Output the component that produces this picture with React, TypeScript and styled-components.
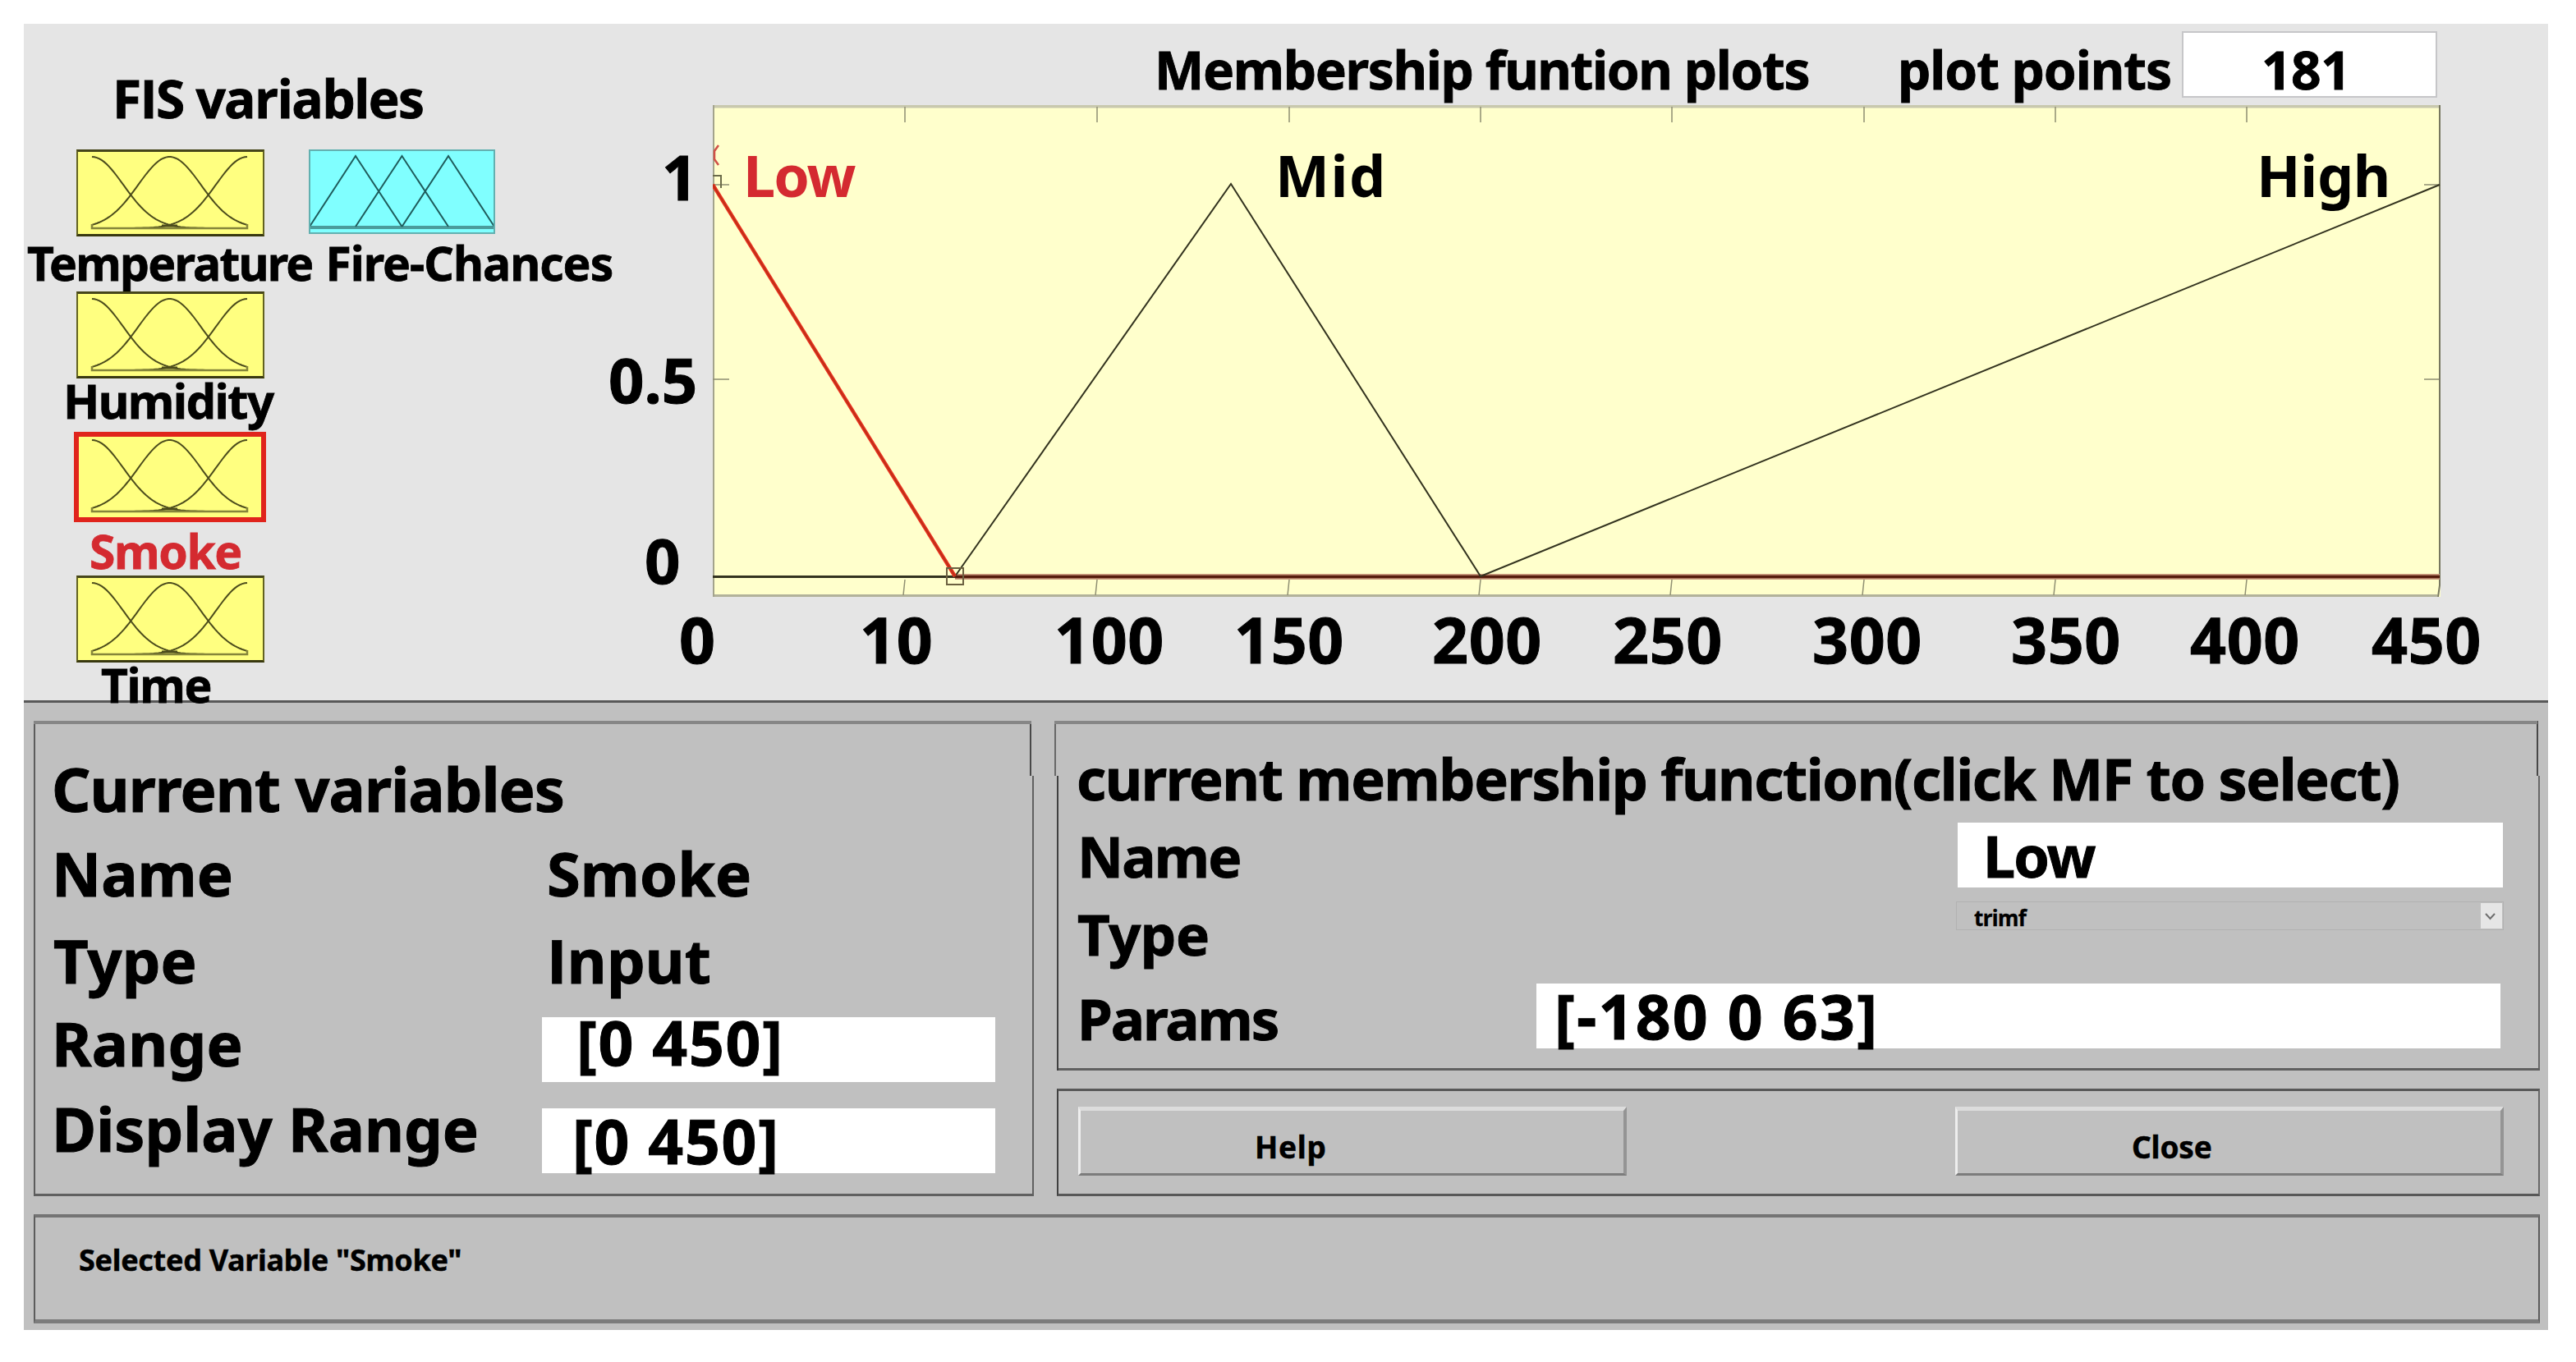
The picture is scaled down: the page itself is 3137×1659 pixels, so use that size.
import React, { useState } from 'react'
import styled, { createGlobalStyle, css } from 'styled-components'

//Styles
const GlobalStyle = createGlobalStyle`
* {
  box-sizing: border-box;
}
body {
  margin: 0;
  background-color: white;
}
#root {
  display: flex;
}
`
const noto = css`
font-family: 'Noto Sans', 'Open Sans', sans-serif;
font-weight: 700;
line-height: 1;
white-space: nowrap;
color: black;
`

//Components
const Text = styled.span<{ $size: number; $spacing?: number; $x?: number; $y?: number; $plainI?: boolean; $red?: boolean }>`
${noto}
display: block;
font-size: ${p => p.$size}px;
letter-spacing: ${p => p.$spacing || 0}px;
margin: ${p => p.$y || 0}px 0 0 ${p => p.$x || 0}px;
-webkit-text-stroke: ${p => p.$size / 75}px;
${p => p.$plainI && "font-family: 'Open Sans', sans-serif;"}
${p => p.$red && 'color: #d42a30;'}
`
const Window = styled.div`
width: 3074px;
height: 1591px;
margin: 29px 0 0 29px;
background-color: #e5e5e5;
`
const Top = styled.div`
display: flex;
height: 824px;
`
const Sidebar = styled.div`
width: 713px;
flex-shrink: 0;
padding-top: 59px;
`
const IconRow = styled.div<{ $top: number; $left?: number }>`
display: flex;
gap: 54px;
height: ${p => (p.$left ? 110 : 106)}px;
margin: ${p => p.$top}px 0 0 ${p => p.$left || 64}px;
`
const LabelRow = styled.div<{ $top: number }>`
display: flex;
margin-top: ${p => p.$top}px;
`
const VariableBox = styled.svg<{ $selected?: boolean; $output?: boolean }>`
display: block;
width: ${p => (p.$selected ? 234 : p.$output ? 227 : 229)}px;
height: ${p => (p.$selected ? 110 : p.$output ? 103 : 106)}px;
background-color: ${p => (p.$output ? '#80ffff' : '#ffff80')};
border: 2px solid ${p => (p.$output ? '#62b0b0' : '#62621f')};
${p => !p.$output && css`
border-top: 3px solid #45451a;
border-bottom: 3px solid #38380f;
`}
${p => p.$selected && css`
border: 6px solid #e0241c;
`}
`
const Plots = styled.div`
flex: 1;
`
const PlotHeader = styled.div`
display: flex;
align-items: flex-start;
height: 99px;
padding-left: 664px;
`
const HeaderCell = styled.div<{ $width: number }>`
width: ${p => p.$width}px;
padding-top: 24px;
`
const PointsBox = styled.div`
width: 311px;
height: 81px;
margin-top: 9px;
padding: 13px 0 0 95px;
border: 2px solid #c6c6c8;
background-color: white;
`
const ChartRow = styled.div`
display: flex;
height: 599px;
`
const YAxis = styled.div`
width: 126px;
flex-shrink: 0;
`
const Chart = styled.svg`
display: block;
width: 2104px;
height: 599px;
text {
  font-family: 'Noto Sans', sans-serif;
  font-weight: 700;
  font-size: 70px;
  -webkit-text-stroke: 1px;
}
`
const XAxis = styled.div`
display: flex;
padding: 13px 0 0 85px;
`
const XTick = styled.div<{ $width: number }>`
width: ${p => p.$width}px;
flex-shrink: 0;
`
const Bottom = styled.div`
display: flex;
flex-direction: column;
gap: 22px;
height: 767px;
padding: 22px 10px 8px 12px;
border-top: 3px solid #585858;
background-color: #c0c0c0;
`
const Panels = styled.div`
display: flex;
gap: 25px;
`
const RightColumn = styled.div`
display: flex;
flex-direction: column;
gap: 22px;
`
const line = (color: string) => `linear-gradient(${color}, ${color}) no-repeat`

// the outer edges step sideways 67px below the top of both panels
const VariablePanel = styled.div`
width: 1218px;
height: 579px;
padding: 46px 0 0 21px;
background:
  ${line('#868686')} 0 0 / 1215px 4px,
  ${line('#5c5c5c')} 0 0 / 2px 100%,
  ${line('#606060')} 0 100% / 100% 3px,
  ${line('#484848')} 1213px 0 / 2px 67px,
  ${line('#606060')} 1216px 67px / 2px 512px;
`
const FunctionPanel = styled.div`
width: 1809px;
height: 426px;
padding: 35px 0 0 27px;
background:
  ${line('#868686')} 0 0 / 1806px 4px,
  ${line('#686868')} 0 0 / 2px 67px,
  ${line('#404040')} 3px 67px / 2px 359px,
  ${line('#606060')} 3px 100% / 1806px 3px,
  ${line('#484848')} 1805px 0 / 2px 67px,
  ${line('#686868')} 1807px 67px / 2px 359px;
`
const ButtonPanel = styled.div`
display: flex;
gap: 400px;
height: 131px;
margin-left: 3px;
padding: 19px 0 0 24px;
border: 3px solid #585858;
border-left: 2px solid #404040;
border-right: 2px solid #686868;
`
const StatusPanel = styled.div`
height: 133px;
padding: 34px 0 0 53px;
border: 2px solid #5c5c5c;
border-top: 4px solid #747474;
border-bottom: 5px solid #7c7c7c;
`
const Row = styled.div<{ $height: number; $label: number }>`
display: grid;
grid-template-columns: ${p => p.$label}px auto;
justify-content: start;
align-items: start;
height: ${p => p.$height}px;
`
const Field = styled.div<{ $width: number; $left: number; $top?: number }>`
width: ${p => p.$width}px;
height: 79px;
margin-top: ${p => p.$top || 0}px;
padding-left: ${p => p.$left}px;
background-color: white;
display: flex;
align-items: flex-start;
`
const Select = styled.div`
display: flex;
justify-content: space-between;
width: 667px;
height: 35px;
padding: 1px 1px 1px 21px;
border: 1px solid #b2b2b2;
`
const Arrow = styled.svg`
width: 26px;
height: 31px;
background-color: #e6e6e6;
`
const Button = styled.button`
display: flex;
align-items: flex-start;
width: 668px;
height: 84px;
padding: 25px 0 0 212px;
background-color: #c0c0c0;
border: solid;
border-width: 5px 4px 3px 3px;
border-color: #dcdcdc #949494 #7c7c7c #eeeeee;
`

const bell = (center: number) => {
  let d = ''
  for (let x = 19; x <= 208; x += 3) {
    const y = 96 - 87 * Math.exp(-((x - center) ** 2) / 2934)
    d += `${d ? 'L' : 'M'}${x} ${y.toFixed(1)}`
  }
  return d
}

function InputIcon({ selected = false }: { selected?: boolean }) {
  return (
    <VariableBox $selected={selected} viewBox={selected ? '3 5 222 98' : '2 3 225 100'}>
      <g fill="none" stroke="#4c4c1c" strokeWidth="2">
        <path d={bell(19)} />
        <path d={bell(113.5)} />
        <path d={bell(208)} />
        <path d="M19 91V96H208V91" stroke="#85853a" strokeWidth="2.5" />
        <path d="M104 93H123" strokeWidth="3" />
      </g>
    </VariableBox>
  )
}

function OutputIcon() {
  return (
    <VariableBox $output viewBox="2 2 223 99">
      <path d="M0 95H227" stroke="#4a9c9c" strokeWidth="4" />
      <path d="M1 94L57 8L113.5 94M57 94L113.5 8L170 94M113.5 94L170 8L226 94" fill="none" stroke="#1f5c5c" strokeWidth="2" />
    </VariableBox>
  )
}

const topTicks = [234, 468, 702, 935, 1168, 1402, 1635, 1868]

function MembershipChart() {
  return (
    <Chart viewBox="0 0 2104 599">
      <rect width="2104" height="599" fill="#ffffcc" />
      <path d="M0 1.5H2104" stroke="#c8c8ae" strokeWidth="4" />
      <path d="M0 597.5H2100" stroke="#b2b29a" strokeWidth="3" />
      <path d="M1 0V599" stroke="#a3a38c" strokeWidth="2" />
      <path d="M2103 0V585L2101 599" fill="none" stroke="#77775f" strokeWidth="2" />
      <g stroke="#8f8f72" strokeWidth="1.5">
        {topTicks.map(x => (
          <path key={x} d={`M${x} 2V21M${x} 578L${x - 2} 597`} />
        ))}
        <path d="M0 97H20M0 334H20M2084 97H2102M2084 334H2102" />
      </g>
      <path d="M0 574.5H295" stroke="#33331f" strokeWidth="3" />
      <path d="M295 574.5H2103" stroke="#c9997c" strokeWidth="7" />
      <path d="M295 574.5H2103" stroke="#561c0c" strokeWidth="3.5" />
      <path d="M295 574L631 96L935 574L2103 97" fill="none" stroke="#33331f" strokeWidth="2" />
      <path d="M0 97L295 574" stroke="#e8301e" strokeWidth="4.5" />
      <path d="M0 97L295 574" stroke="#b83018" strokeWidth="1.5" />
      <path d="M0 86H10V101" fill="none" stroke="#6b6b4a" strokeWidth="2" />
      <rect x="285" y="564" width="20" height="20" fill="none" stroke="#6b6040" strokeWidth="2" />
      <path d="M7 49L2 56V66L7 73" fill="none" stroke="#d05048" strokeWidth="2.5" />
      <text x="37" y="112" fill="#d42a30" letterSpacing="-2">Low</text>
      <text x="685" y="112" letterSpacing="1.5">Mid</text>
      <text x="1880" y="112" letterSpacing="-0.3">High</text>
    </Chart>
  )
}

const xTicks = [
  { label: '0', width: 220 },
  { label: '10', width: 237 },
  { label: '100', width: 219 },
  { label: '150', width: 241 },
  { label: '200', width: 220 },
  { label: '250', width: 243 },
  { label: '300', width: 242 },
  { label: '350', width: 218 },
  { label: '400', width: 221 },
  { label: '450', width: 140 },
]

export default function App() {
  const [mfName] = useState('Low')
  const [range] = useState('[0 450]')

  return (
    <>
      <GlobalStyle />
      <Window>
        <Top>
          <Sidebar>
            <Text $size={64} $spacing={-1.7} $x={108} $plainI>FIS variables</Text>
            <IconRow $top={30}>
              <InputIcon />
              <OutputIcon />
            </IconRow>
            <LabelRow $top={4}>
              <Text $size={57} $spacing={-1.8} $x={4}>Temperature</Text>
              <Text $size={57} $spacing={-1} $x={16}>Fire-Chances</Text>
            </LabelRow>
            <IconRow $top={6}>
              <InputIcon />
            </IconRow>
            <LabelRow $top={-2}>
              <Text $size={58} $spacing={-1.6} $x={48}>Humidity</Text>
            </LabelRow>
            <IconRow $top={9} $left={61}>
              <InputIcon selected />
            </IconRow>
            <LabelRow $top={7}>
              <Text $size={57} $spacing={-1.4} $x={80} $red>Smoke</Text>
            </LabelRow>
            <IconRow $top={1}>
              <InputIcon />
            </IconRow>
            <LabelRow $top={-1}>
              <Text $size={57} $spacing={-1.3} $x={94}>Time</Text>
            </LabelRow>
          </Sidebar>
          <Plots>
            <PlotHeader>
              <HeaderCell $width={905}>
                <Text $size={64} $spacing={-1.4}>Membership funtion plots</Text>
              </HeaderCell>
              <HeaderCell $width={346}>
                <Text $size={64} $spacing={-1.1}>plot points</Text>
              </HeaderCell>
              <PointsBox>
                <Text $size={64} $spacing={-0.5}>181</Text>
              </PointsBox>
            </PlotHeader>
            <ChartRow>
              <YAxis>
                <Text $size={76} $x={64} $y={49}>1</Text>
                <Text $size={76} $x={-1} $y={171}>0.5</Text>
                <Text $size={76} $x={43} $y={144}>0</Text>
              </YAxis>
              <MembershipChart />
            </ChartRow>
            <XAxis>
              {xTicks.map(t => (
                <XTick key={t.label} $width={t.width}>
                  <Text $size={77} $spacing={0.6}>{t.label}</Text>
                </XTick>
              ))}
            </XAxis>
          </Plots>
        </Top>
        <Bottom>
          <Panels>
            <VariablePanel>
              <Row $height={103} $label={598}>
                <Text $size={74} $spacing={-0.95} $x={1}>Current variables</Text>
              </Row>
              <Row $height={106} $label={598}>
                <Text $size={74} $x={1}>Name</Text>
                <Text $size={74} $x={6}>Smoke</Text>
              </Row>
              <Row $height={101} $label={598}>
                <Text $size={74} $spacing={0.1} $x={3}>Type</Text>
                <Text $size={74} $spacing={-0.2} $x={6} $plainI>Input</Text>
              </Row>
              <Row $height={104} $label={598}>
                <Text $size={74} $spacing={0.2} $x={1}>Range</Text>
                <Field $width={552} $left={42} $top={5}>
                  <Text $size={75} $spacing={1.7} $y={-7}>{range}</Text>
                </Field>
              </Row>
              <Row $height={104} $label={598}>
                <Text $size={74} $x={1}>Display Range</Text>
                <Field $width={552} $left={37} $top={12}>
                  <Text $size={75} $spacing={1.7} $y={2}>{range}</Text>
                </Field>
              </Row>
            </VariablePanel>
            <RightColumn>
              <FunctionPanel>
                <Row $height={89} $label={1700}>
                  <Text $size={70} $spacing={-1.42}>current membership function(click MF to select)</Text>
                </Row>
                <Row $height={96} $label={1073}>
                  <Text $size={69} $spacing={-1.8} $x={1} $y={6}>Name</Text>
                  <Field $width={664} $left={31}>
                    <Text $size={70} $spacing={-2} $y={5}>{mfName}</Text>
                  </Field>
                </Row>
                <Row $height={100} $label={1071}>
                  <Text $size={69} $spacing={-0.5} $x={1} $y={5}>Type</Text>
                  <Select>
                    <Text $size={26} $spacing={-0.6} $y={5}>trimf</Text>
                    <Arrow viewBox="0 0 26 31">
                      <path d="M6 13L11.5 19L17 13" fill="none" stroke="#6e6e6e" strokeWidth="2" />
                    </Arrow>
                  </Select>
                </Row>
                <Row $height={80} $label={560}>
                  <Text $size={69} $spacing={-2.1} $x={1} $y={8}>Params</Text>
                  <Field $width={1174} $left={22}>
                    <Text $size={75} $spacing={2.3} $y={2}>[-180 0 63]</Text>
                  </Field>
                </Row>
              </FunctionPanel>
              <ButtonPanel>
                <Button>
                  <Text $size={37} $spacing={0.7}>Help</Text>
                </Button>
                <Button>
                  <Text $size={37} $spacing={-0.2}>Close</Text>
                </Button>
              </ButtonPanel>
            </RightColumn>
          </Panels>
          <StatusPanel>
            <Text $size={36} $spacing={-0.3}>Selected Variable "Smoke"</Text>
          </StatusPanel>
        </Bottom>
      </Window>
    </>
  )
}
